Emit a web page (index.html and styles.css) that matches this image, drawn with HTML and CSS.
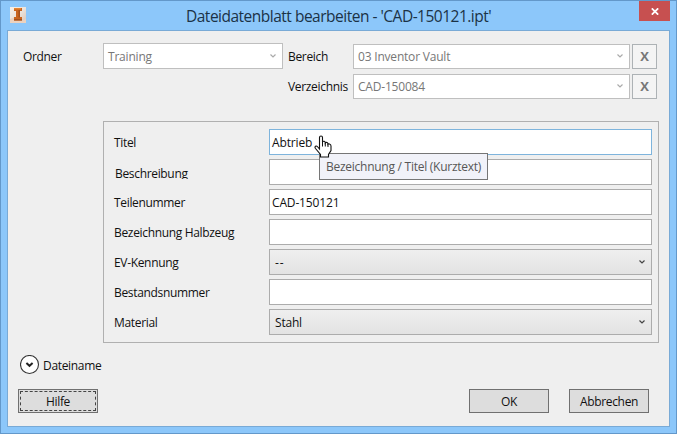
FILE: index.html
```html
<!DOCTYPE html>
<html lang="de">
<head>
<meta charset="utf-8">
<title>Dateidatenblatt bearbeiten</title>
<link rel="stylesheet" href="styles.css">
</head>
<body>
<div class="window">
  <header class="titlebar">
    <svg class="app-icon" width="16" height="16" viewBox="0 0 16 16">
      <defs><linearGradient id="ig" x1="0" y1="0" x2="1" y2="1"><stop offset="0" stop-color="#f7f1e9"/><stop offset=".5" stop-color="#ebe3dc"/><stop offset="1" stop-color="#dcc4b2"/></linearGradient></defs>
      <rect width="16" height="16" fill="url(#ig)"/>
      <path d="M0 16V12L5 10L12 14L16 12V16Z" fill="#ecd2bf"/>
      <path d="M4 1H12V4H10V10H12V13.500H4V10H6V4H4Z" fill="#c9641f"/>
      <path d="M8.500 3H10V10.500H8.500ZM4 12H12V13.500H4Z" fill="#a3501d"/>
      <path d="M4 1H11V2.500H4Z" fill="#e58431"/>
    </svg>
    <h1 class="title">Dateidatenblatt bearbeiten - 'CAD-150121.ipt'</h1>
    <div class="close"><svg width="8" height="7" viewBox="0 0 8 7"><path d="M.8 .3L7.200 6.700M7.200 .3L.8 6.700" stroke="#fff" stroke-width="1.700"/></svg></div>
  </header>
  <main class="client">
    <section class="location">
      <span class="label">Ordner</span>
      <div class="combo off folder"><span>Training</span><svg class="chev" width="6" height="4" viewBox="0 0 6 4"><path d="M.5 .5L3 3L5.500 .5"/></svg></div>
      <div class="area">
        <span class="label">Bereich</span>
        <div class="combo off"><span>03 Inventor Vault</span><svg class="chev" width="6" height="4" viewBox="0 0 6 4"><path d="M.5 .5L3 3L5.500 .5"/></svg></div>
        <div class="clear">X</div>
        <span class="label">Verzeichnis</span>
        <div class="combo off"><span>CAD-150084</span><svg class="chev" width="6" height="4" viewBox="0 0 6 4"><path d="M.5 .5L3 3L5.500 .5"/></svg></div>
        <div class="clear">X</div>
      </div>
    </section>
    <section class="fields">
      <span class="label">Titel</span>
      <div class="input active"><span>Abtrieb</span>
        <svg class="hand" width="18" height="23" viewBox="0 0 18 23">
          <path d="M5.500 12V2.500Q5.500 1 7 1T8.500 2.500V7Q9 6 10.200 6.300Q11.300 6.600 11.300 8Q12 7 13 7.500Q14 8 14 9.200Q14.600 8.400 15.500 9Q17 9.500 17 11V15.500L14.500 19.500V22H6.500V19.500L1.500 13.500Q.5 12 1.500 11.200Q2.500 10.500 3.800 12L5.500 14Z" fill="#fff" stroke="#111" stroke-width="1.100"/>
          <path d="M8.500 7V11.500M11.300 8V11.500M14 9V12" stroke="#111" fill="none"/>
        </svg>
        <div class="tooltip">Bezeichnung / Titel (Kurztext)</div>
      </div>
      <div class="label clipped">Beschreibung</div>
      <div class="input"></div>
      <span class="label">Teilenummer</span>
      <div class="input"><span>CAD-150121</span></div>
      <span class="label">Bezeichnung Halbzeug</span>
      <div class="input"></div>
      <span class="label">EV-Kennung</span>
      <div class="combo"><span class="dashes">--</span><svg class="chev" width="6" height="4" viewBox="0 0 6 4"><path d="M.5 .5L3 3L5.500 .5"/></svg></div>
      <span class="label">Bestandsnummer</span>
      <div class="input"></div>
      <span class="label">Material</span>
      <div class="combo"><span>Stahl</span><svg class="chev" width="6" height="4" viewBox="0 0 6 4"><path d="M.5 .5L3 3L5.500 .5"/></svg></div>
    </section>
    <div class="expander">
      <svg width="20" height="20" viewBox="0 0 20 20"><circle cx="9.500" cy="9.500" r="9" fill="#fff" stroke="#333" stroke-width="1.100"/><path d="M6.400 8L9.500 10.800L12.600 8" fill="none" stroke="#222" stroke-width="2"/></svg>
      <span class="label">Dateiname</span>
    </div>
    <footer class="actions">
      <div class="button focused"><span>Hilfe</span></div>
      <div class="button ok">OK</div>
      <div class="button">Abbrechen</div>
    </footer>
  </main>
</div>
</body>
</html>
```
FILE: styles.css
```css
* { box-sizing: border-box; }
body {
  margin: 0;
  font: 12px/16px "Open Sans", "Noto Sans", sans-serif;
  letter-spacing: -0.33px;
  color: #111;
}
.window {
  width: 677px;
  height: 434px;
  padding: 0 6px 6px;
  border: 1px solid #6398ca;
  background: #8cc7fa;
  display: flex;
  flex-direction: column;
}
.titlebar { height: 29px; flex: none; display: flex; align-items: flex-start; }
.app-icon { margin: 6px 0 0 3px; }
.title {
  margin: 4px 0 0;
  padding-left: 160px;
  flex: 1;
  font-size: 15.5px;
  line-height: 22px;
  font-weight: 400;
  letter-spacing: -0.5px;
  color: #1b3246;
  white-space: nowrap;
}
.close {
  width: 31px;
  height: 20px;
  background: #c75050;
  display: flex;
  align-items: center;
  justify-content: center;
}
.client {
  flex: 1;
  border: 1px solid #79aad6;
  background: #efefef;
  display: flex;
  flex-direction: column;
}
.label { white-space: nowrap; padding-top: 2px; }
.location { display: flex; padding: 12px 0 0 15px; align-items: flex-start; }
.location > .label { width: 80px; padding-top: 6px; }
.area {
  display: grid;
  grid-template-columns: 65px 277px 25px;
  grid-auto-rows: 25px;
  row-gap: 5px;
  align-items: center;
  margin: 1px 0 0 5px;
}
.area .label { padding-top: 1px; }
.combo {
  height: 100%;
  border: 1px solid #acacac;
  background: linear-gradient(#efefef, #e3e3e3);
  padding: 1px 6px 0 5px;
  display: flex;
  align-items: center;
  justify-content: space-between;
  letter-spacing: -0.2px;
}
.dashes { letter-spacing: 1px; }
.chev { margin-top: -2px; fill: none; stroke: #444; stroke-width: 1.2; }
.off { background: #fff; border-color: #bfbfbf; color: #777; padding-left: 4px; }
.off .chev { stroke: #aaa; }
.folder.combo { width: 180px; height: 26px; }
.clear {
  height: 25px;
  margin-left: 2px;
  width: 25px;
  border: 1px solid #adb2b5;
  background: #f4f4f4;
  color: #777;
  font-weight: 700;
  font-size: 13px;
  line-height: 23px;
  text-align: center;
}
.fields {
  width: 556px;
  height: 222px;
  margin: 22px 0 0 95px;
  border: 1px solid #b0b0b0;
  padding: 7px 0 0 10px;
  display: grid;
  grid-template-columns: 155px 383px;
  grid-auto-rows: 26px;
  row-gap: 4px;
  align-content: start;
  align-items: center;
}
.input {
  height: 26px;
  border: 1px solid #acacac;
  background: #fff;
  padding: 5px 0 0 2px;
  position: relative;
  letter-spacing: -0.15px;
}
.active { border-color: #7eb4dc; }
.clipped { height: 13px; overflow: hidden; margin: 1px 0 0 1px; padding: 0; line-height: 16px; }
.hand { position: absolute; left: 44px; top: 5px; z-index: 2; }
.tooltip {
  position: absolute;
  left: 49px;
  top: 23px;
  z-index: 1;
  width: 169px;
  height: 27px;
  padding: 5px 0 0 6px;
  border: 1px solid #767676;
  background: #f1f2f9;
  color: #575757;
  letter-spacing: -0.26px;
  white-space: nowrap;
}
.expander { display: flex; align-items: center; height: 20px; margin: 12px 0 0 12px; gap: 3px; }
.expander .label { padding-top: 1px; }
.actions { display: flex; margin: 14px 20px 0 10px; }
.button {
  width: 80px;
  height: 24px;
  border: 1px solid #707070;
  background: #ddd;
  text-align: center;
  line-height: 24px;
}
.focused { padding: 1px; }
.focused span { display: block; height: 20px; line-height: 20px; border: 1px dashed #444; }
.ok { margin: 0 20px 0 auto; }
```
